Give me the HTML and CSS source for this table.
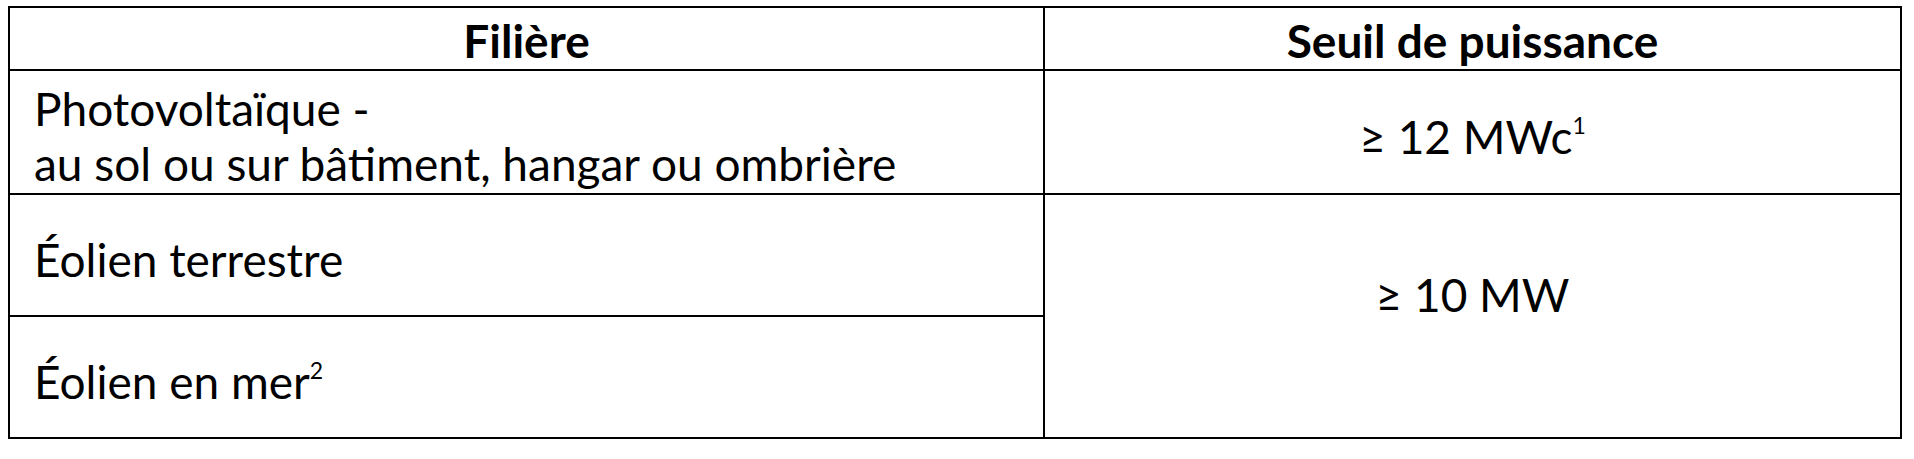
FILE: index.html
```html
<!DOCTYPE html>
<html lang="fr">
<head>
<meta charset="utf-8">
<title>Seuils de puissance</title>
<link rel="stylesheet" href="styles.css">
</head>
<body>
<table class="seuils">
  <colgroup>
    <col class="col-filiere">
    <col class="col-seuil">
  </colgroup>
  <thead>
    <tr class="row-head">
      <th>Filière</th>
      <th>Seuil de puissance</th>
    </tr>
  </thead>
  <tbody>
    <tr class="row-pv">
      <td class="filiere filiere-pv">Photovoltaïque -<br>au sol ou sur bâtiment, hangar ou ombrière</td>
      <td class="seuil seuil-pv">≥ 12 MWc<sup>1</sup></td>
    </tr>
    <tr class="row-eol">
      <td class="filiere filiere-eol">Éolien terrestre</td>
      <td class="seuil seuil-merged" rowspan="2">≥ 10 MW</td>
    </tr>
    <tr class="row-eol">
      <td class="filiere filiere-eol">Éolien en mer<sup>2</sup></td>
    </tr>
  </tbody>
</table>
</body>
</html>
```

FILE: styles.css
```css
html, body {
  margin: 0;
  padding: 0;
  background: #ffffff;
}

body {
  padding: 6px 0 0 8px;
  font-family: Lato, "Open Sans", "Liberation Sans", sans-serif;
  color: #000000;
}

.seuils {
  border-collapse: collapse;
  width: 1892px;
  table-layout: fixed;
  font-size: 46px;
  line-height: 55px;
}

.col-filiere { width: 1035px; }
.col-seuil { width: 857px; }

.seuils th,
.seuils td {
  border: 2px solid #000000;
  padding: 0 24px;
}

.seuils th {
  font-weight: 700;
  text-align: center;
  padding-top: 5px;
  padding-bottom: 1px;
}

.seuils td.filiere {
  text-align: left;
  vertical-align: top;
}

.seuils td.filiere-pv {
  padding-top: 10px;
  padding-bottom: 2px;
}

.seuils td.filiere-eol {
  padding-top: 37px;
  padding-bottom: 28px;
}

.seuils td.seuil {
  text-align: center;
  vertical-align: top;
}

.seuils td.seuil-pv {
  padding-top: 38px;
}

.seuils td.seuil-merged {
  padding-top: 72px;
}

sup {
  font-size: 0.5em;
  line-height: 0;
  vertical-align: 0.85em;
}
```
